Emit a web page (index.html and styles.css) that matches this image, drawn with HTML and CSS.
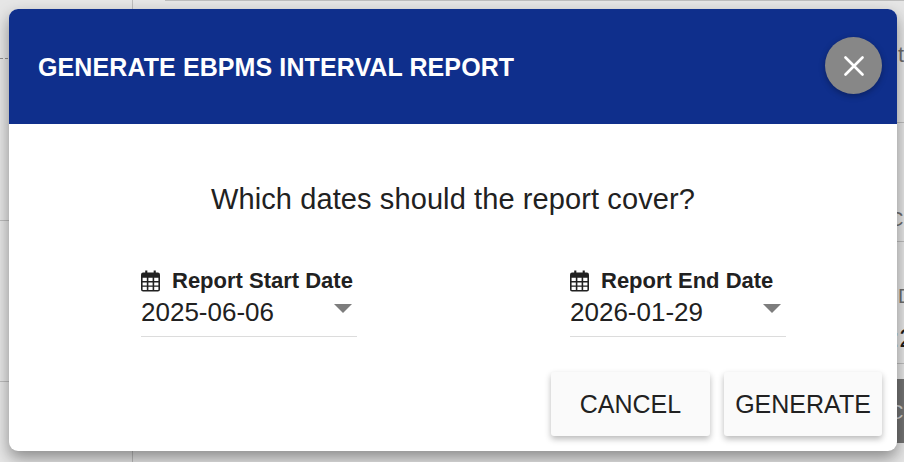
FILE: index.html
```html
<!DOCTYPE html>
<html lang="en">
<head>
  <meta charset="UTF-8" />
  <meta name="viewport" content="width=device-width, initial-scale=1" />
  <title>Generate EBPMS Interval Report</title>
  <link rel="stylesheet" href="styles.css">
</head>
<body>
  <!-- page behind the dialog, only slivers of it show -->
  <div class="backdrop">
    <span class="line-v line-v-top"></span>
    <span class="line-v line-v-bottom"></span>
    <span class="line-h line-h-top"></span>
    <span class="line-h line-h-dash"></span>
    <span class="line-h line-h-left1"></span>
    <span class="line-h line-h-left2"></span>
    <span class="line-h line-h-right1"></span>
    <span class="line-h line-h-right2"></span>
    <span class="line-h line-h-right3"></span>
    <span class="peek peek-t">t</span>
    <span class="peek peek-c">C</span>
    <span class="peek peek-d">D</span>
    <span class="peek peek-2">:2</span>
    <span class="peek-bar">C</span>
  </div>

  <div class="modal">
    <div class="modal-header">
      <h1>GENERATE EBPMS INTERVAL REPORT</h1>
    </div>
    <button class="close-btn" aria-label="Close">
      <svg viewBox="0 0 20 20" width="20" height="20">
        <path d="M1.500 1.500L18.500 18.500M18.500 1.500L1.500 18.500" stroke="#fff" stroke-width="2.600" stroke-linecap="round" fill="none" />
      </svg>
    </button>

    <div class="modal-body">
      <p class="question">Which dates should the report cover?</p>

      <div class="date-row">
        <div class="date-field">
          <label>
            <svg class="cal-icon" viewBox="0 0 18 20" width="19" height="22">
              <path fill="#212121" fill-rule="evenodd" d="M4 0h2v2h6V0h2v2h2a2 2 0 0 1 2 2v14a2 2 0 0 1-2 2H2a2 2 0 0 1-2-2V4a2 2 0 0 1 2-2h2zM1.500 7v3h4V7zm5.500 0v3h4V7zm5.500 0v3h4V7zM1.500 11.500v2.800h4v-2.800zm5.500 0v2.800h4v-2.800zm5.500 0v2.800h4v-2.800zM1.500 15.500v2.500a.5.5 0 0 0 .5.5h3.500v-3zm5.500 0v3h4v-3zm5.500 0v3H16a.5.5 0 0 0 .5-.5v-2.500z" />
            </svg>
            Report Start Date
          </label>
          <div class="date-select">
            <span>2025-06-06</span>
            <i class="caret"></i>
          </div>
        </div>

        <div class="date-field">
          <label>
            <svg class="cal-icon" viewBox="0 0 18 20" width="19" height="22">
              <path fill="#212121" fill-rule="evenodd" d="M4 0h2v2h6V0h2v2h2a2 2 0 0 1 2 2v14a2 2 0 0 1-2 2H2a2 2 0 0 1-2-2V4a2 2 0 0 1 2-2h2zM1.500 7v3h4V7zm5.500 0v3h4V7zm5.500 0v3h4V7zM1.500 11.500v2.800h4v-2.800zm5.500 0v2.800h4v-2.800zm5.500 0v2.800h4v-2.800zM1.500 15.500v2.500a.5.5 0 0 0 .5.5h3.500v-3zm5.500 0v3h4v-3zm5.500 0v3H16a.5.5 0 0 0 .5-.5v-2.500z" />
            </svg>
            Report End Date
          </label>
          <div class="date-select">
            <span>2026-01-29</span>
            <i class="caret"></i>
          </div>
        </div>
      </div>

      <div class="modal-actions">
        <button class="action-btn btn-cancel">CANCEL</button>
        <button class="action-btn btn-generate">GENERATE</button>
      </div>
    </div>
  </div>
</body>
</html>
```

FILE: styles.css
```css
body {
  margin: 0;
  width: 904px;
  height: 462px;
  box-sizing: border-box;
  padding: 9px 7px 11px 9px;
  overflow: hidden;
  position: relative;
  background: #e6e6e6;
  font-family: "Liberation Sans", Arial, sans-serif;
  color: #212121;
}

/* Page behind the dialog */
.backdrop {
  position: absolute;
  inset: 0;
  overflow: hidden;
}
.line-v, .line-h {
  position: absolute;
  background: #bdbdbd;
}
.line-v {
  left: 132px;
  width: 1px;
}
.line-v-top { top: 0; height: 9px; }
.line-v-bottom { top: 451px; height: 11px; }
.line-h { height: 1px; }
.line-h-top { left: 165px; top: 0; width: 739px; }
.line-h-dash {
  left: 0;
  top: 58px;
  width: 9px;
  background: repeating-linear-gradient(to right, #8e8e8e 0 3px, transparent 3px 5px);
}
.line-h-left1 { left: 0; top: 220px; width: 9px; }
.line-h-left2 { left: 0; top: 381px; width: 9px; }
.line-h-right1 { left: 897px; top: 122px; width: 7px; }
.line-h-right2 { left: 897px; top: 241px; width: 7px; }
.line-h-right3 { left: 897px; top: 363px; width: 7px; }
.peek {
  position: absolute;
  font-size: 20px;
  line-height: 22px;
  color: #6e6e6e;
}
.peek-t { left: 898px; top: 44px; font-size: 22px; }
.peek-c { left: 889px; top: 208px; }
.peek-d { left: 898px; top: 285px; }
.peek-2 { left: 892px; top: 327px; font-size: 26px; color: #1c1c1c; }
.peek-bar {
  position: absolute;
  left: 860px;
  top: 379px;
  width: 44px;
  height: 64px;
  padding-left: 29px;
  box-sizing: border-box;
  background: #737373;
  color: #d0d0d0;
  font-size: 20px;
  line-height: 66px;
  overflow: hidden;
}

/* Dialog */
.modal {
  position: relative;
  height: 100%;
  display: flex;
  flex-direction: column;
  background: #fff;
  border-radius: 9px;
  box-shadow: 0 7px 16px rgba(0, 0, 0, 0.4);
}
.modal-header {
  height: 115px;
  box-sizing: border-box;
  flex: none;
  display: flex;
  align-items: center;
  padding: 1px 0 0 29px;
  background: #0f2f8c;
  border-radius: 9px 9px 0 0;
}
.modal-header h1 {
  margin: 0;
  font-size: 25px;
  font-weight: bold;
  letter-spacing: 0.1px;
  color: #fff;
}
.close-btn {
  position: absolute;
  top: 28px;
  right: 15px;
  width: 57px;
  height: 57px;
  padding: 0;
  border: none;
  border-radius: 50%;
  background: #878787;
  box-shadow: 0 2px 6px rgba(0, 0, 0, 0.3);
  display: flex;
  align-items: center;
  justify-content: center;
}
.modal-body {
  flex: 1;
  display: flex;
  flex-direction: column;
  padding: 0 15px 15px;
}
.question {
  margin: 60px 0 0;
  text-align: center;
  font-size: 29px;
  letter-spacing: 0.1px;
  line-height: 30px;
}
.date-row {
  display: flex;
  margin-top: 55px;
  padding-left: 117px;
  gap: 213px;
}
.date-field {
  width: 216px;
}
.date-field label {
  display: flex;
  align-items: center;
  gap: 12px;
  font-size: 22px;
  font-weight: bold;
  line-height: 24px;
}
.cal-icon {
  flex: none;
}
.date-select {
  display: flex;
  justify-content: space-between;
  align-items: center;
  height: 44px;
  box-sizing: border-box;
  padding: 0 5px 4px 0;
  border-bottom: 1px solid #dcdcdc;
  font-size: 26px;
}
.caret {
  width: 0;
  height: 0;
  margin-bottom: 9px;
  border-left: 9px solid transparent;
  border-right: 9px solid transparent;
  border-top: 9px solid #7d7d7d;
}
.modal-actions {
  display: flex;
  justify-content: flex-end;
  gap: 14px;
  margin-top: auto;
}
.action-btn {
  height: 64px;
  padding: 0;
  border: none;
  border-radius: 3px;
  background: #fafafa;
  color: #212121;
  font-family: inherit;
  font-size: 25px;
  box-shadow: 0 3px 6px rgba(0, 0, 0, 0.28);
}
.btn-cancel { width: 159px; }
.btn-generate { width: 158px; }
```
